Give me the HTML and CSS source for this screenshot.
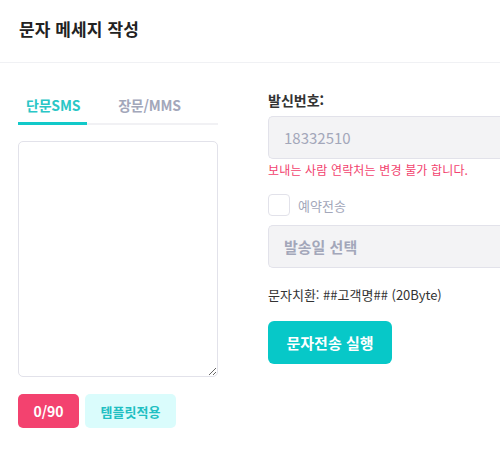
FILE: index.html
```html
<!DOCTYPE html>
<html lang="ko">
<head>
<meta charset="utf-8">
<link rel="stylesheet" href="styles.css">
</head>
<body>
<header class="header"><h1 class="title">문자 메세지 작성</h1></header>
<main class="main">
  <section class="left">
    <nav class="tabs">
      <span class="tab active">단문SMS</span>
      <span class="tab">장문/MMS</span>
    </nav>
    <textarea class="msg"></textarea>
    <div class="btns">
      <span class="count">0/90</span>
      <span class="tpl">템플릿적용</span>
    </div>
    <p class="note">발송 내역은 하단의 발송 결과에서 확인 가능합니다.</p>
  </section>
  <section class="right">
    <label class="label">발신번호:</label>
    <div class="field"><span class="ph">18332510</span></div>
    <p class="err">보내는 사람 연락처는 변경 불가 합니다.</p>
    <div class="check-row"><span class="box"></span><span class="check-label">예약전송</span></div>
    <div class="field"><span class="ph bold">발송일 선택</span></div>
    <p class="subst">문자치환: ##고객명## (20Byte)</p>
    <button class="send">문자전송 실행</button>
  </section>
</main>
</body>
</html>
```

FILE: styles.css
```css
* { box-sizing: border-box; }
html, body { margin: 0; padding: 0; background: #fff; overflow: hidden; }
body { width: 500px; height: 450px; font-family: "Noto Sans CJK KR", "Noto Sans", sans-serif; color: #333; }
.header { height: 63px; border-bottom: 1px solid #f0f1f4; padding: 0 19px; display: flex; align-items: center; }
.title { margin: 0; font-size: 17px; font-weight: 700; color: #222; letter-spacing: 0.1px; margin-top: -6px; }
.main { display: flex; padding: 0 0 0 18px; gap: 50px; }
.left { width: 200px; flex: none; padding-top: 29px; }
.tabs { display: flex; border-bottom: 2px solid #f1f1f4; height: 33px; gap: 23px; }
.tab { padding: 0 7px 0 8px; font-size: 14px; font-weight: 700; color: #a3a7ba; line-height: 27px; height: 33px; letter-spacing: -0.2px; }
.tab.active { color: #2ac6c6; border-bottom: 3px solid #12c9c9; }
.msg { display: block; width: 200px; height: 236px; margin-top: 16px; border: 1px solid #e2e2ea; border-radius: 5px; resize: vertical; font: inherit; }
.btns { display: flex; gap: 6px; margin-top: 17px; }
.count { width: 61px; height: 34px; border-radius: 5px; background: #f3426f; color: #fff; font-size: 14px; font-weight: 700; display: flex; align-items: center; justify-content: center; }
.tpl { width: 91px; height: 34px; border-radius: 5px; background: #dafcfc; color: #20bfc2; font-size: 13px; font-weight: 700; display: flex; align-items: center; justify-content: center; }
.note { margin: 21px 0 0; font-size: 12px; line-height: 18px; color: #b8bbca; white-space: nowrap; }
.right { flex: none; width: 260px; padding-top: 27px; }
.label { display: block; font-size: 14px; font-weight: 700; color: #333; line-height: 20px; }
.field { width: 260px; height: 43px; margin-top: 6px; border: 1px solid #e2e2ea; border-right: none; border-radius: 5px 0 0 5px; background: #f3f3f5; display: flex; align-items: center; padding-left: 15px; }
.ph { font-size: 15px; color: #a3a7ba; }
.ph.bold { font-weight: 700; }
.err { margin: 2px 0 0; font-size: 12px; color: #f2426e; line-height: 18px; letter-spacing: 0.15px; }
.check-row { display: flex; align-items: center; margin-top: 15px; gap: 8px; }
.box { width: 22px; height: 22px; border: 1px solid #e2e2ea; border-radius: 4px; background: #fff; }
.check-label { font-size: 13px; color: #a3a7ba; }
.check-row + .field { margin-top: 9px; }
.subst { margin: 18px 0 0; font-size: 13px; color: #333; line-height: 18px; }
.send { margin-top: 17px; width: 124px; height: 43px; border: none; border-radius: 6px; background: #07c8c8; color: #fff; font: inherit; font-size: 15px; font-weight: 700; }
```
